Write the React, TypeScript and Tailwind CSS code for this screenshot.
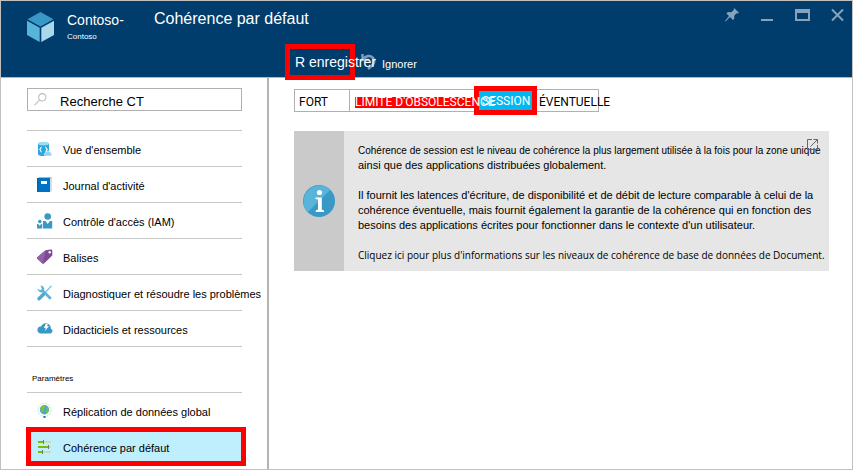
import type { ReactNode } from 'react';

const font = "font-['Liberation_Sans',Arial,sans-serif]";

function DatabaseIcon() {
  return (
    <svg width="16" height="16" viewBox="0 0 16 16" aria-hidden="true">
      <path d="M1 2.600v10.300C1 14.200 3.500 15 6.500 15s5.500-.8 5.500-2.100V2.600z" fill="#2aa5de" />
      <ellipse cx="6.500" cy="2.600" rx="5.500" ry="1.900" fill="#9bdcf5" />
      <path d="M4.700 6c-1.300 0-.8 1.900-1.800 2.500C3.900 9 3.400 11 4.700 11M8.300 6c1.300 0 .8 1.900 1.800 2.500-1 .5-.5 2.500-1.800 2.500" fill="none" stroke="#e8f8ff" strokeWidth="1.200" />
      <path d="M8.500 15a1.700 1.700 0 0 1 .3-3.300 2.300 2.300 0 0 1 4.300-.2 1.800 1.800 0 0 1 .6 3.500z" fill="#8fd3f0" stroke="#fff" strokeWidth=".6" />
    </svg>
  );
}

function JournalIcon() {
  return (
    <svg width="16" height="16" viewBox="0 0 16 16" aria-hidden="true">
      <path d="M2 0h12.500v14l-1 1V1H1z" fill="#8dbfe4" />
      <path d="M0 1h13v14H0z" fill="#0072c6" />
      <path d="M0 1h1.500v14H0z" fill="#0062ad" />
      <path d="M4 4h6v3H4z" fill="#fff" />
    </svg>
  );
}

function AccessIcon() {
  return (
    <svg width="16" height="16" viewBox="0 0 16 16" aria-hidden="true" fill="#3999c6">
      <circle cx="10.700" cy="3.500" r="3.300" />
      <path d="M6 8h2.500l2.200 3L13 8h2.200v7.500H6z" />
      <circle cx="2.800" cy="8.500" r="1.800" />
      <path d="M0 11h1.200l1.500 1.800L4.200 11h1v4.500H0z" />
    </svg>
  );
}

function TagIcon() {
  return (
    <svg width="16" height="16" viewBox="0 0 16 16" aria-hidden="true">
      <path d="M0 8.500 8.500 1.200 14 .500q1.300 0 1.300 1.300v4.700L7 14.500q-.8.700-1.600 0L0 9.500z" fill="#804998" />
      <path d="M0 8.500 8.500 1.200 5.800 14.800 0 9.500z" fill="#9361a8" />
      <circle cx="12.700" cy="3.200" r="1.200" fill="#fff" />
    </svg>
  );
}

function ToolsIcon() {
  return (
    <svg width="16" height="16" viewBox="0 0 16 16" aria-hidden="true">
      <path d="m14.500.8-7 7.400" stroke="#7ecbea" strokeWidth="1.500" />
      <path d="m7 8.700-5 5" stroke="#4ba8d2" strokeWidth="3.400" strokeLinecap="round" />
      <path d="M3.500.500a4 4 0 0 1 3.700 5l7.600 7.300-1.900 2L5.400 7.300A3.900 3.900 0 0 1 .600 3.400l2.300 1.900 2-1z" fill="#59b4d9" />
    </svg>
  );
}

function CloudIcon() {
  return (
    <svg width="16" height="16" viewBox="0 0 16 16" aria-hidden="true">
      <path d="M3.300 12.500A3.300 3.300 0 0 1 .5 8.500a3 3 0 0 1 3.500-3A5 5 0 0 1 12.500 4a4 4 0 0 1 1.300 3.500 2.600 2.600 0 0 1-.5 5z" fill="#3999c6" />
      <path d="m9 2.500 1.800.500-.8 2.300 2-.2-4 5 .8-3.300-2 .2z" fill="#fff" />
    </svg>
  );
}

function GlobeIcon() {
  return (
    <svg width="16" height="16" viewBox="0 0 16 16" aria-hidden="true">
      <circle cx="7.500" cy="7" r="6.500" fill="none" stroke="#b9dff0" strokeWidth="1" strokeDasharray="2 1" />
      <circle cx="7.500" cy="6.800" r="4.700" fill="#3fa9dc" />
      <path d="M3.500 4.500 7 2.200l1.500 2L6.500 6l1 1.500-1.500 2L3.500 7zM9.500 4l2.300 1.500v3l-2 2-1.300-2L10 7z" fill="#8cbf26" />
      <path d="M6.500 13h2v2h-2z" fill="#2a6fa8" />
    </svg>
  );
}

function SlidersIcon() {
  return (
    <svg width="16" height="16" viewBox="0 0 16 16" aria-hidden="true">
      <path d="M1 2h13v2H1zM1 7h13v2H1zM1 12h13v2H1z" fill="#c3dfb0" />
      <path d="M1 2h5v2H1zM1 7h10v2H1zM1 12h4v2H1z" fill="#7fba00" />
      <path d="M6 1h1v4H6zM11 6h1v4h-1zM5 11h1v4H5z" fill="#6b7f7a" />
    </svg>
  );
}

function NavItem({ icon, label }: { icon: ReactNode; label: string }) {
  return (
    <li className="border-t border-[#c8c8c8]">
      <a href="#" className="flex h-[35px] items-center gap-[10px] pl-[10px] whitespace-nowrap">
        <span className="w-4 shrink-0">{icon}</span>
        <span className="pt-1">{label}</span>
      </a>
    </li>
  );
}

function Header() {
  return (
    <header className="flex h-[77px] border-b border-[#b4b4b4] bg-[#003c6c] text-white">
      <div className="flex w-[153px] shrink-0 gap-3 pt-[10px] pl-[25px]">
        <svg width="29" height="32" viewBox="0 0 28 32" aria-hidden="true">
          <path d="M14 1 27 8.300 14 15.500 1 8.300z" fill="#3999c6" />
          <path d="m.500 9.800 12.700 7V31L.500 24z" fill="#59b4d9" />
          <path d="m27.500 9.800-12.700 7V31l12.700-7z" fill="#a9d8ec" />
        </svg>
        <div>
          <p className="text-[14px] leading-[18px]">Contoso-</p>
          <p className="text-[8px] leading-[16px]">Contoso</p>
        </div>
      </div>
      <div className="min-w-0 grow">
        <div className="flex items-start justify-between pt-[7px] pr-[8px]">
          <h1 className="text-[16px] leading-[22px]">Cohérence par défaut</h1>
          <div className="flex gap-[21px] text-[#86a3bb]">
            <button type="button" aria-label="Épingler">
              <svg width="14" height="14" viewBox="0 0 14 14" fill="currentColor">
                <path d="m9 0 5 4.700-1.500.800-1-.2-2.300 2.500.1 3-1.300 1.300-3-3L.500 13.500 0 13l4-5-2.500-2.600L2.800 4l3.500.200L8.700 2z" />
              </svg>
            </button>
            <button type="button" aria-label="Réduire">
              <svg width="14" height="14" viewBox="0 0 14 14" fill="currentColor">
                <path d="M1 11h12v2H1z" />
              </svg>
            </button>
            <button type="button" aria-label="Agrandir">
              <svg width="15" height="14" viewBox="0 0 15 14" fill="currentColor">
                <path d="M0 1h15v12H0zm2 4v6h11V5z" fillRule="evenodd" />
              </svg>
            </button>
            <button type="button" aria-label="Fermer">
              <svg width="13" height="14" viewBox="0 0 13 14" fill="none" stroke="currentColor" strokeWidth="2">
                <path d="m1 1.500 11 11M12 1.500l-11 11" />
              </svg>
            </button>
          </div>
        </div>
        <div className="flex pt-[14px] pl-[131px]">
          <button type="button" className="relative z-10 flex h-[36px] w-[70px] items-center border-[5px] border-[#ff0000] pl-[5px] text-[14px] whitespace-nowrap">
            R enregistrer
          </button>
          <button type="button" className="flex h-[36px] items-center gap-[6px] pl-[6px] text-[11px]">
            <svg width="15" height="16" viewBox="0 0 15 16" fill="none" stroke="#7f9db6" strokeWidth="2.500" aria-hidden="true">
              <path d="M1.500 0v6H8M2 5.500C5 1.500 9 1 11.500 3.500S14 9 11 11.500L7 15" />
            </svg>
            <span className="pt-1">Ignorer</span>
          </button>
        </div>
      </div>
    </header>
  );
}

function Sidebar() {
  return (
    <aside className="w-[268px] shrink-0 border-r-2 border-[#b4b4b4] pt-[10px] pr-[25px] pl-[26px] text-[11px] text-black">
      <label className="flex h-[23px] items-center gap-[13px] border border-[#b0b0b0] pl-[6px]">
        <svg width="15" height="15" viewBox="0 0 15 15" fill="none" stroke="#bcbcbc" strokeWidth="1.200" aria-hidden="true">
          <circle cx="9.500" cy="5" r="4.200" />
          <path d="M6.500 8 .500 14" />
        </svg>
        <input type="text" aria-label="Recherche" defaultValue="Recherche CT" className="w-full min-w-0 bg-transparent pt-1 text-[13px] outline-none" />
      </label>
      <ul className="mt-[19px] border-b border-[#c8c8c8]">
        <NavItem icon={<DatabaseIcon />} label="Vue d'ensemble" />
        <NavItem icon={<JournalIcon />} label="Journal d'activité" />
        <NavItem icon={<AccessIcon />} label="Contrôle d'accès (IAM)" />
        <NavItem icon={<TagIcon />} label="Balises" />
        <NavItem icon={<ToolsIcon />} label="Diagnostiquer et résoudre les problèmes" />
        <NavItem icon={<CloudIcon />} label="Didacticiels et ressources" />
      </ul>
      <h2 className="mt-[25px] mb-[7px] pl-[5px] text-[8px] leading-[13px]">Paramètres</h2>
      <ul>
        <NavItem icon={<GlobeIcon />} label="Réplication de données global" />
        <li className="-mr-1 -ml-px">
          <a href="#" aria-current="page" className="-mt-px flex h-[39px] items-center gap-[10px] border-[5px] border-[#ff0000] bg-[#bfeefd] pl-[6px]">
            <span className="w-4 shrink-0"><SlidersIcon /></span>
            <span className="pt-1">Cohérence par défaut</span>
          </a>
        </li>
      </ul>
    </aside>
  );
}

function ConsistencyPicker() {
  return (
    <div className="flex h-[23px] w-[305px] border border-[#b0b0b0] font-[Roboto,'Liberation_Sans',sans-serif] text-[12px] whitespace-nowrap text-black">
      <button type="button" className="w-[55px] border-r border-[#b0b0b0] pt-[3px] pl-1 text-left">FORT</button>
      <button type="button" className="relative z-10 w-[124px] pt-[3px] pl-[5px] text-left text-white">
        <span className="block w-[119px] bg-[#ff0000] leading-[11px]">LIMITE D'OBSOLESCENCE</span>
      </button>
      <button type="button" aria-pressed="true" className="relative -my-1 h-[29px] w-[63px] border-[5px] border-[#ff0000] bg-[#00b9f2] pl-[3px] text-left text-white">
        SESSION
      </button>
      <button type="button" className="w-[60px] pt-[3px] pl-[2px] text-left">ÉVENTUELLE</button>
    </div>
  );
}

function InfoPanel() {
  return (
    <section className="relative mt-[19px] flex bg-[#e6e6e6] text-black">
      <div className="flex w-[50px] shrink-0 items-center justify-center bg-[#cacaca]">
        <svg width="32" height="32" viewBox="0 0 32 32" aria-hidden="true">
          <circle cx="16" cy="16" r="16" fill="#3999c6" />
          <path d="M4.700 27.300A16 16 0 0 1 27.300 4.700z" fill="#59b4d9" />
          <circle cx="16.500" cy="7.500" r="2.600" fill="#fff" />
          <path d="M12.500 12.500h6.300V24.500l2.200 1V27h-8.300v-1.500l2.300-1V14.500l-2.500-.6z" fill="#fff" />
        </svg>
      </div>
      <div className="pt-[12px] pb-[8px] pl-[14px] text-[11px] leading-[15px] whitespace-nowrap">
        <p className="text-[10px] leading-[15px]">Cohérence de session est le niveau de cohérence la plus largement utilisée à la fois pour la zone unique</p>
        <p>ainsi que des applications distribuées globalement.</p>
        <p className="mt-[15px]">
          Il fournit les latences d'écriture, de disponibilité et de débit de lecture comparable à celui de la
          <br />
          cohérence éventuelle, mais fournit également la garantie de la cohérence qui en fonction des
          <br />
          besoins des applications écrites pour fonctionner dans le contexte d'un utilisateur.
        </p>
        <p className="mt-[15px] font-['Open_Sans','Liberation_Sans',sans-serif] text-[10px] leading-[15px]">Cliquez ici pour plus d'informations sur les niveaux de cohérence de base de données de Document.</p>
      </div>
      <a href="#" aria-label="Ouvrir la documentation" className="absolute top-2 right-[11px]">
        <svg width="11" height="11" viewBox="0 0 11 11" fill="none" stroke="#666" aria-hidden="true">
          <path d="M5 .500H.500v10h10V6M6.500.500h4v4M10.500.500l-7 7" />
        </svg>
      </a>
    </section>
  );
}

export default function App() {
  return (
    <div className={`flex min-h-screen flex-col overflow-hidden border border-[#c0c0c0] bg-white ${font}`}>
      <Header />
      <div className="flex grow">
        <Sidebar />
        <main className="min-w-0 grow pt-[11px] pr-[23px] pl-[25px]">
          <ConsistencyPicker />
          <InfoPanel />
        </main>
      </div>
    </div>
  );
}
